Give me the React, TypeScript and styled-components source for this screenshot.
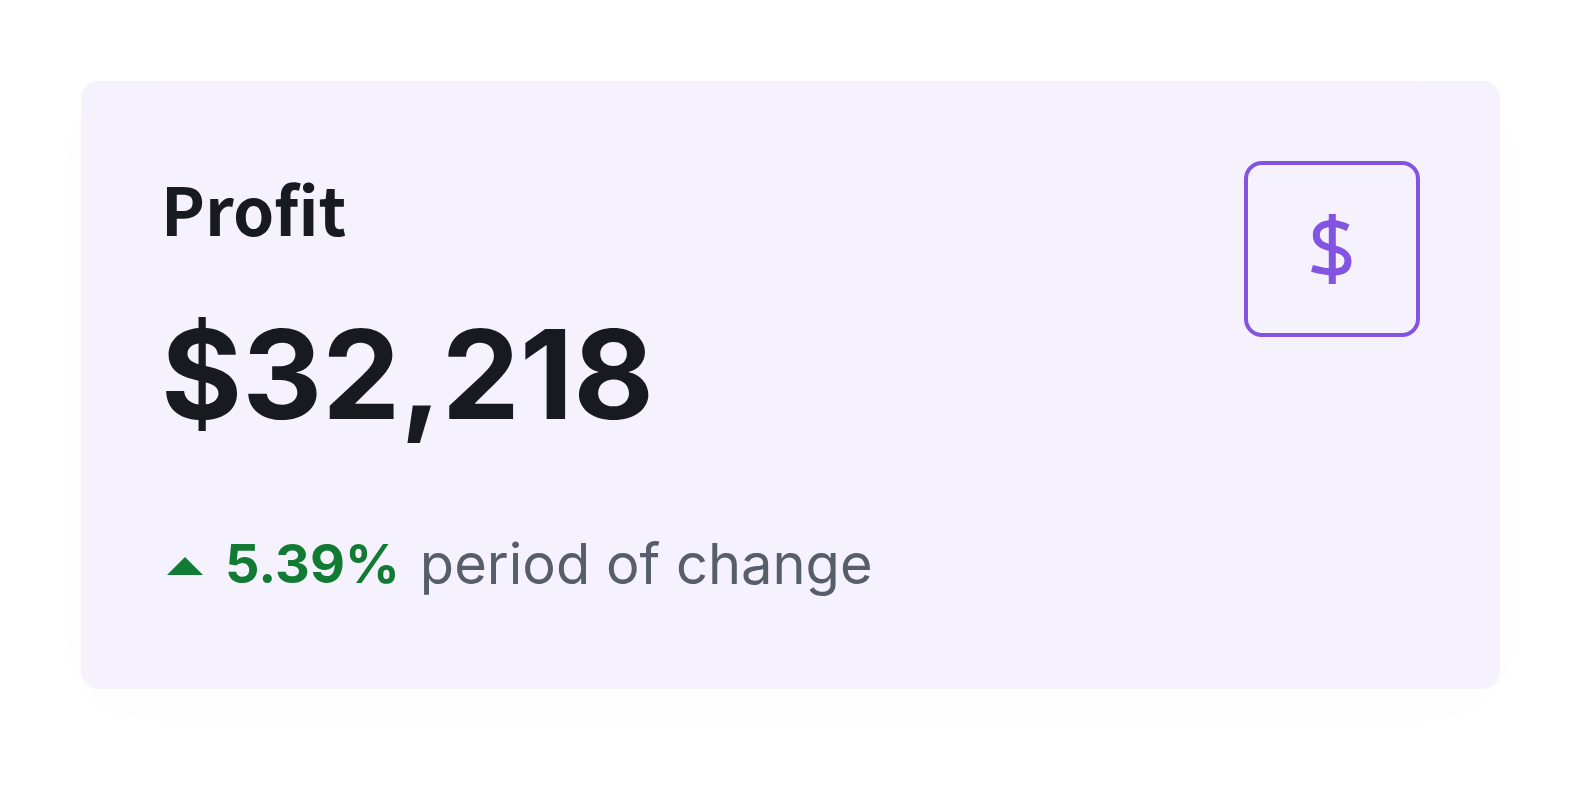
import React from "react";
import styled, { createGlobalStyle } from "styled-components";

const GlobalStyle = createGlobalStyle`
  *, *::before, *::after {
    box-sizing: border-box;
  }
  body {
    margin: 0;
    background: #fff;
    font-family: Inter, "Liberation Sans", sans-serif;
  }
`;

const Page = styled.main`
  padding: 81px 83px 81px 81px;
`;

const Card = styled.article`
  display: flex;
  justify-content: space-between;
  align-items: flex-start;
  padding: 80px;
  border-radius: 17px;
  background: #f5f1fd;
  box-shadow: 0 16px 80px rgba(23, 26, 31, 0.012);
`;

const Details = styled.div`
  display: flex;
  flex-direction: column;
`;

const Title = styled.h2`
  margin: 0;
  color: #171a1f;
  font-family: "Noto Sans CJK SC", "Noto Sans", sans-serif;
  font-size: 66px;
  font-weight: 700;
  line-height: 92px;
`;

const Value = styled.p`
  margin: 20px 0 0;
  color: #171a1f;
  font-size: 124px;
  font-weight: 700;
  line-height: 202px;
`;

const Trend = styled.p`
  display: flex;
  align-items: center;
  gap: 20px;
  margin: 44px 0 0;
  padding-left: 6px;
  color: #565e6c;
  font-size: 56px;
  line-height: 90px;
`;

const Change = styled.strong`
  color: #117b34;
  font-size: 54px;
  font-weight: 700;
`;

const UpArrow = styled.svg`
  width: 36px;
  height: 18px;
  flex: none;
  margin: 4px 2px 0 0;
  fill: #117b34;
`;

const IconFrame = styled.div`
  display: flex;
  flex: none;
  align-items: center;
  justify-content: center;
  width: 176px;
  height: 176px;
  border: 4px solid #8353e2;
  border-radius: 18px;
`;

const CurrencyIcon = styled.svg`
  width: 44px;
  height: 70px;
  fill: none;
  stroke: #8353e2;
  stroke-width: 7;
`;

export default function App() {
  return (
    <>
      <GlobalStyle />
      <Page>
        <Card>
          <Details>
            <Title>Profit</Title>
            <Value>$32,218</Value>
            <Trend>
              <UpArrow viewBox="0 0 36 18" aria-hidden="true">
                <path d="M0 18 18 0l18 18z" />
              </UpArrow>
              <Change>5.39%</Change>
              <span>period of change</span>
            </Trend>
          </Details>
          <IconFrame>
            <CurrencyIcon viewBox="0 0 44 70" aria-hidden="true">
              <path d="M22.3 0v70" />
              <path d="M38 13.7C33 11.4 28 9.5 22.5 9.5 12.5 9.5 6.3 14 6.3 21c0 8 5.7 11 16 13.3C33 36.5 38 40 38 47c0 8-6 11-14.5 11C16 58 10 56.5 2 54.3" />
            </CurrencyIcon>
          </IconFrame>
        </Card>
      </Page>
    </>
  );
}
